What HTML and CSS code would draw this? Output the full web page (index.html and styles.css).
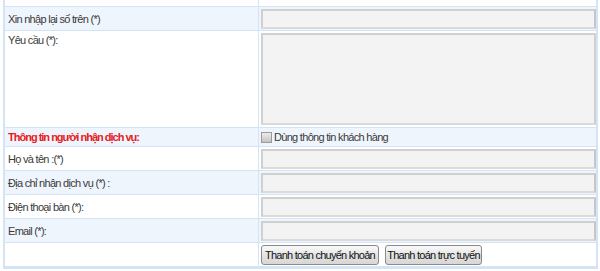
FILE: index.html
```html
<!DOCTYPE html>
<html lang="vi">
<head>
<meta charset="utf-8">
<link rel="stylesheet" href="styles.css">
</head>
<body>
<div class="wrap">
<table class="form">
  <tr class="r0"><td class="lbl"></td><td class="fld"><span class="cap"></span></td></tr>
  <tr class="alt"><td class="lbl">Xin nhập lại số trên (*)</td><td class="fld"><div class="inp"></div></td></tr>
  <tr class="tall"><td class="lbl top">Yêu cầu (*):</td><td class="fld"><div class="area"></div></td></tr>
  <tr class="alt head"><td class="lbl red">Thông tin người nhận dịch vụ:</td><td class="fld"><span class="chk"></span><span class="chklbl">Dùng thông tin khách hàng</span></td></tr>
  <tr><td class="lbl">Họ và tên :(*)</td><td class="fld"><div class="inp"></div></td></tr>
  <tr class="alt"><td class="lbl">Địa chỉ nhận dịch vụ (*) :</td><td class="fld"><div class="inp"></div></td></tr>
  <tr><td class="lbl">Điện thoại bàn (*):</td><td class="fld"><div class="inp"></div></td></tr>
  <tr class="alt"><td class="lbl">Email (*):</td><td class="fld"><div class="inp"></div></td></tr>
  <tr class="btns"><td class="lbl"></td><td class="fld"><button class="btn b1">Thanh toán chuyển khoản</button><button class="btn b2">Thanh toán trực tuyến</button></td></tr>
</table>
</div>
</body>
</html>
```
FILE: styles.css
```css
html, body { margin: 0; padding: 0; background: #fff; }
body { font-family: "Liberation Sans", Arial, sans-serif; font-size: 11px; letter-spacing: -0.7px; color: #3a3a3a; }
.wrap { padding-left: 3px; }
.form {
  width: 595px;
  border-collapse: separate;
  border-spacing: 0;
  border: 2px solid #d3e4f7;
  border-top: 0;
  table-layout: fixed;
}
.form td { box-sizing: border-box; padding: 0; border-bottom: 1px solid #d3e4f7; height: 24px; vertical-align: middle; }
.form td.lbl { width: 254px; border-right: 1px solid #d3e4f7; padding-left: 3px; white-space: nowrap; }
.form td.fld { padding-left: 2px; padding-right: 0; }
.form tr.alt td { background: #eff5fc; }
.form tr.r0 td { height: 7px; }
.form tr.tall td { height: 97px; }
.form tr.head td { height: 19px; }
.form td.top { vertical-align: top; padding-top: 3px; }
.red { color: #e8201c; font-weight: bold; letter-spacing: -1px; }
.inp { height: 16px; background: #f3f3f3; border: 2px solid #d0d0d0; border-right-color: #c6c6c6; border-bottom-color: #dadada; }
.area { height: 88px; background: #f3f3f3; border: 2px solid #d0d0d0; border-bottom-color: #dadada; }
.cap { display: block; width: 4px; height: 2px; background: #9db2d6; margin-left: 172px; margin-top: -6px; }
.chk {
  display: inline-block; box-sizing: border-box; width: 11px; height: 11px; vertical-align: -2px;
  border: 1px solid #9a9a9a; background: linear-gradient(#ececec, #c4c4c4); margin-right: 2px;
}
.chklbl { color: #3a3a3a; }
.btn {
  font-family: inherit; font-size: 11px; letter-spacing: -0.75px; color: #111; white-space: nowrap;
  height: 20px; padding: 0; margin: 0 6px 0 0;
  border: 1px solid #8a8a8a; border-radius: 3px;
  background: linear-gradient(#fbfbfb, #e4e4e4 50%, #d6d6d6);
  vertical-align: middle;
}
.b1 { width: 118px; }
.b2 { width: 97px; }
```
